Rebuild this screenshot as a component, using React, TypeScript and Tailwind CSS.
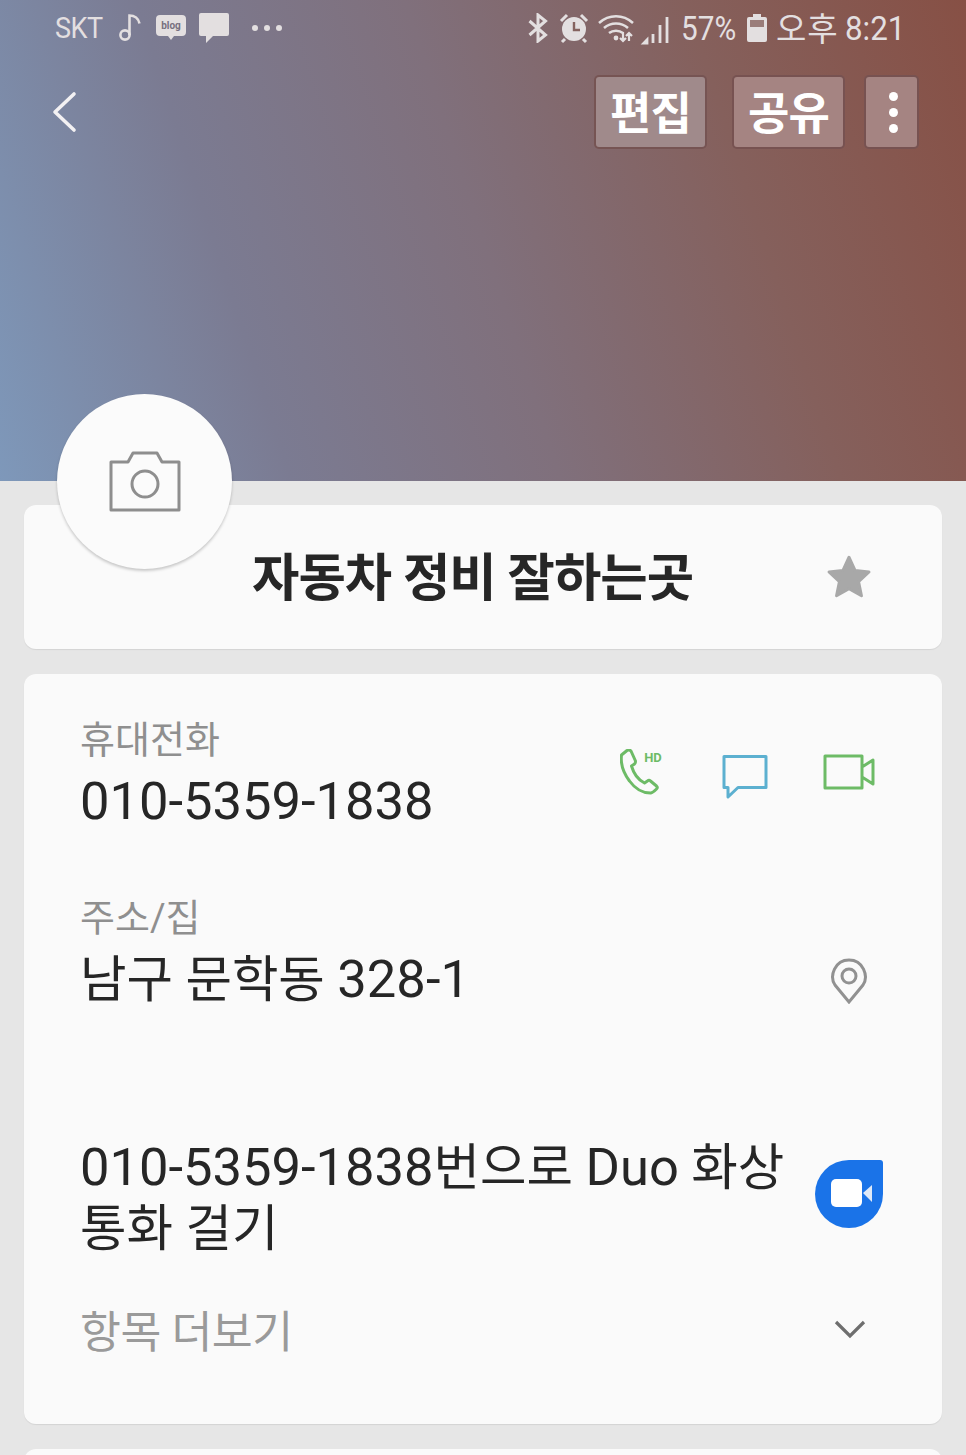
const font = "font-['Roboto','Noto_Sans_CJK_KR',sans-serif]";

const StatusBar = () => {
  return <div className="flex items-center justify-between h-[56px] pl-[55px] pr-[65px] text-[#e3dfe0]">
    <div className="flex items-center">
      <span className="text-[30px] leading-none tracking-[-0.5px] scale-x-90 origin-left w-[53px]">SKT</span>
      <svg width="26" height="32" viewBox="0 0 26 32" className="ml-[10px]" fill="none" stroke="#e3dfe0" strokeWidth="2.6">
        <circle cx="7" cy="23" r="4.6" />
        <path d="M11.5 23V3.5c5 0 9 3 10 8" />
      </svg>
      <svg width="32" height="30" viewBox="0 0 32 30" className="ml-[11px]">
        <path d="M5 2h22a4 4 0 0 1 4 4v13a4 4 0 0 1-4 4h-8l-3 4-3-4H5a4 4 0 0 1-4-4V6a4 4 0 0 1 4-4z" fill="#e3dfe0" />
        <text x="16" y="16" textAnchor="middle" fontSize="10" fontWeight="700" fill="#77707f" fontFamily="Roboto">blog</text>
      </svg>
      <svg width="32" height="32" viewBox="0 0 32 32" className="ml-[11px]">
        <path d="M3 1h26a2 2 0 0 1 2 2v19a2 2 0 0 1-2 2H15l-7 7v-7H3a2 2 0 0 1-2-2V3a2 2 0 0 1 2-2z" fill="#e3dfe0" />
      </svg>
      <div className="flex gap-[6px] ml-[22px]">
        <i className="size-[6px] rounded-full bg-[#e3dfe0]" />
        <i className="size-[6px] rounded-full bg-[#e3dfe0]" />
        <i className="size-[6px] rounded-full bg-[#e3dfe0]" />
      </div>
    </div>
    <div className="flex items-center">
      <svg width="20" height="30" viewBox="0 0 20 30" fill="none" stroke="#e3dfe0" strokeWidth="3">
        <path d="M1.500 8l16 14-7.500 6V2l7.500 6-16 14" />
      </svg>
      <svg width="30" height="32" viewBox="0 0 30 32" className="ml-[11px]">
        <circle cx="15" cy="17" r="12" fill="#e3dfe0" />
        <path d="M15 10v8h6" fill="none" stroke="#85635f" strokeWidth="2.4" />
        <path d="M2 9l6-6M28 9l-6-6M6 27l-3 3M24 27l3 3" stroke="#e3dfe0" strokeWidth="3" />
      </svg>
      <svg width="72" height="34" viewBox="0 0 72 34" className="ml-[9px]" fill="none" stroke="#e3dfe0" strokeWidth="2.6">
        <path d="M1 12c10-9 24-9 34 0M6 17c7-6 17-6 24 0M11 22c4-3 10-3 14 0" />
        <circle cx="18" cy="27" r="2.400" fill="#e3dfe0" stroke="none" />
        <path d="M25 21v9M22 27l3 3 3-3M31 30v-8M28 25l3-3 3 3" strokeWidth="2.200" />
        <path d="M46 32h3v-3zM55 32V23M62 32V14M69 32V6" strokeWidth="2.800" />
      </svg>
      <span className="text-[33px] leading-none ml-[11px] scale-x-90 origin-left w-[54px] whitespace-nowrap">57%</span>
      <svg width="20" height="30" viewBox="0 0 20 30" className="ml-[12px]">
        <path d="M6 1h8v3h4a2 2 0 0 1 2 2v21a2 2 0 0 1-2 2H2a2 2 0 0 1-2-2V6a2 2 0 0 1 2-2h4z" fill="#e3dfe0" />
        <rect x="3" y="7" width="14" height="7" fill="#9a7d7a" />
      </svg>
      <span className="text-[33px] leading-none ml-[9px] mt-[3px] w-[60px] whitespace-nowrap tracking-[1px]">오후</span>
      <span className="text-[33px] leading-none ml-[9px] w-[56px] scale-x-95 origin-left whitespace-nowrap">8:21</span>
    </div>
  </div>
}

const Toolbar = () => {
  const btn = "flex items-center justify-center h-[74px] rounded-[5px] border-2 border-[#6b4645]/80 text-white font-bold";
  return <div className="flex items-center justify-between pl-[50px] pr-[47px] h-[74px] mt-[19px]">
    <svg width="30" height="44" viewBox="0 0 30 44" fill="none" stroke="#f3f1f3" strokeWidth="3.6" strokeLinecap="round" strokeLinejoin="round">
      <path d="M24 4L5 22l19 18" />
    </svg>
    <div className="flex">
      <div className={`${btn} w-[113px] text-[45px] pt-[6px] bg-[#a08a8b] tracking-[-1px]`}>편집</div>
      <div className={`${btn} w-[113px] ml-[25px] text-[45px] pt-[6px] bg-[#a58482] tracking-[-1px]`}>공유</div>
      <div className={`${btn} w-[55px] ml-[19px] flex-col gap-[7px] pl-[3px] bg-[#a58482]`}>
        <i className="size-[9px] rounded-full bg-white" />
        <i className="size-[9px] rounded-full bg-white" />
        <i className="size-[9px] rounded-full bg-white" />
      </div>
    </div>
  </div>
}

const Row = ({ label, children, side }: { label: string; children: React.ReactNode; side?: React.ReactNode }) => {
  return <div className="flex items-center justify-between">
    <div>
      <div className="text-[38px] leading-[44px] text-[#8f8f8f]">{label}</div>
      <div className="text-[50.500px] leading-[62px] mt-[8px] text-[#262626]">{children}</div>
    </div>
    {side}
  </div>
}

export default function App() {
  return <div className={`${font} relative w-[966px] h-[1455px] overflow-hidden bg-[#e6e6e6]`}>
    <header className="h-[481px] bg-[linear-gradient(72deg,#7e98ba_0%,#7b7b92_26%,#80707c_50%,#85605c_75%,#875045_100%)]">
      <StatusBar />
      <Toolbar />
    </header>

    <div className="absolute left-[57px] top-[394px] size-[175px] rounded-full bg-[#fbfbfb] shadow-[0_2px_3px_rgba(0,0,0,0.2)] flex items-center justify-center z-10">
      <svg width="72" height="62" viewBox="0 0 72 62" fill="none" stroke="#8e8e8e" strokeWidth="3" strokeLinejoin="round" className="-mt-[2px]">
        <path d="M2 12h17l5-9h24l5 9h17v48H2z" />
        <circle cx="36" cy="34" r="13" />
      </svg>
    </div>

    <main className="flex flex-col gap-[25px] px-[24px] pt-[24px]">
      <section className="relative h-[144px] bg-[#fafafa] rounded-[12px] shadow-[0_1px_1px_rgba(0,0,0,0.08)] flex items-center pl-[228px] pr-[68px]">
        <h1 className="flex-1 pt-[4px] text-[51.500px] leading-none font-bold text-[#262626] tracking-[-1px] whitespace-nowrap">자동차 정비 잘하는곳</h1>
        <svg width="50" height="50" viewBox="0 0 24 24" fill="#a8a8a8" stroke="#a8a8a8" strokeWidth="1.4" strokeLinejoin="round">
          <path d="M12 2.500l2.900 6.300 6.700.8-5 4.600 1.400 6.800-6-3.400-6 3.400 1.400-6.800-5-4.600 6.700-.8z" />
        </svg>
      </section>

      <section className="h-[750px] bg-[#fafafa] rounded-[12px] shadow-[0_1px_1px_rgba(0,0,0,0.08)] pl-[56px] pr-[58px] pt-[44px]">
        <Row
          label="휴대전화"
          side={<div className="flex items-center gap-[56px] mr-[9px] -mt-[8px]">
            <svg width="46" height="46" viewBox="0 0 46 46" fill="none" stroke="#6dbb66" strokeWidth="3" strokeLinejoin="round">
              <path d="M7 1.500L1.500 6c-1 8 2 18 8 26 5 7 13 12 21 12 2 0 3-1 6-4 1-1 1-2 0-3l-6-5c-1-1-2-1-3 0l-3 2c-6-3-11-10-13-17l3-2c1-1 1-2 1-3L11 2c-1-1-3-1-4-.5z" />
              <text x="33" y="13" textAnchor="middle" fontSize="13" fontWeight="700" fill="#6dbb66" stroke="none" fontFamily="Roboto">HD</text>
            </svg>
            <svg width="46" height="44" viewBox="0 0 46 44" fill="none" stroke="#5cb0d0" strokeWidth="3" strokeLinejoin="round" className="mt-[10px]">
              <path d="M2 1.500h42v31H16L6 42v-9.500H2z" />
            </svg>
            <svg width="52" height="36" viewBox="0 0 52 36" fill="none" stroke="#6dbb66" strokeWidth="3" strokeLinejoin="round" className="-ml-[1px]">
              <path d="M2 2h37v32H2zM39 13l11-7v24l-11-7" />
            </svg>
          </div>}
        >
          <span className="text-[52.500px]">010-5359-1838</span>
        </Row>

        <div className="mt-[63px]">
          <Row
            label="주소/집"
            side={<svg width="38" height="46" viewBox="0 0 38 46" fill="none" stroke="#919191" strokeWidth="3" className="mr-[16px] mt-[54px]">
              <path d="M19 44L5 27C-1 18 5 2 19 2s20 16 14 25z" />
              <circle cx="19" cy="18" r="7" />
            </svg>}
          >
            남구 문학동 <span className="text-[52.500px]">328-1</span>
          </Row>
        </div>

        <div className="flex items-center justify-between mt-[126px]">
          <div className="w-[712px] text-[50.500px] leading-[61px] text-[#262626] whitespace-nowrap">
            <div><span className="text-[52.500px]">010-5359-1838</span>번으로 <span className="text-[52.500px]">Duo</span> 화상</div>
            <div>통화 걸기</div>
          </div>
          <svg width="70" height="70" viewBox="0 0 70 70" className="-mt-[8px]">
            <path d="M35 1h31a3 3 0 0 1 3 3v31a34 34 0 1 1-34-34z" fill="#1a73e8" />
            <rect x="17" y="20" width="31" height="28" rx="5" fill="#fff" />
            <path d="M49 34l9-8v17z" fill="#dfe9f7" />
          </svg>
        </div>

        <div className="flex items-center justify-between mt-[47px]">
          <span className="text-[44.500px] leading-[54px] text-[#9a9a9a] tracking-[-0.5px]">항목 더보기</span>
          <svg width="32" height="20" viewBox="0 0 32 20" fill="none" stroke="#6e6e6e" strokeWidth="3.200" className="mr-[18px] -mt-[8px]">
            <path d="M2 3l14 14L30 3" />
          </svg>
        </div>
      </section>

      <section className="h-[40px] bg-[#fafafa] rounded-[12px]" />
    </main>
  </div>
}
